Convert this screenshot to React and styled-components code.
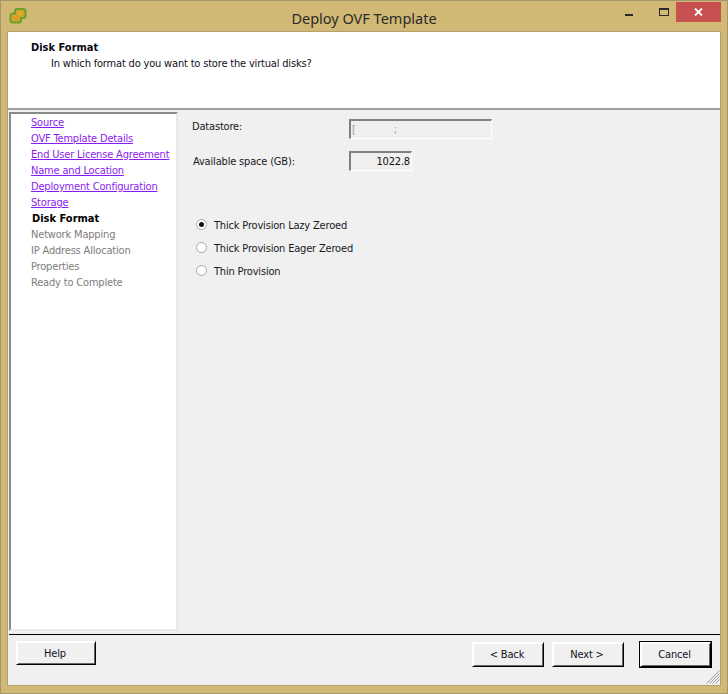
import React from 'react';
import styled, { createGlobalStyle } from 'styled-components';

const Global = createGlobalStyle`
  html, body { margin: 0; padding: 0; background: #d0b874; }
  * { box-sizing: border-box; }
`;
const Win = styled.div`
  width: 728px; height: 694px; background: #d1b975;
  border: 1px solid #a5966f;
  display: flex; flex-direction: column; overflow: hidden;
  font-family: "DejaVu Sans", Tahoma, sans-serif; font-stretch: condensed; font-size: 11px; color: #111;
  letter-spacing: -0.18px;
`;
const TitleBar = styled.div`
  height: 31px; flex: none; display: flex; align-items: flex-start; position: relative; padding-left: 8px;
`;
const AppIcon = styled.svg` width: 18px; height: 18px; margin-top: 6px; flex: none; `;
const Title = styled.div`
  position: absolute; left: 0; right: 0; top: 7px; text-align: center; letter-spacing: 0;
  font-family: "Noto Sans", sans-serif; font-stretch: normal; font-size: 14.5px; color: #2a2a2a; line-height: 20px;
`;
const Controls = styled.div`
  display: flex; align-items: flex-start; margin: 1px 6px 0 auto; position: relative;
`;
const Ctl = styled.div`
  width: ${p => p.$w}px; height: 20px; display: flex; align-items: center; justify-content: center;
  background: ${p => p.$bg || 'transparent'};
`;
const MinGlyph = styled.svg` margin-top: 6px; `;
const Frame = styled.div`
  margin: 0 7px 8px 7px; flex: 1; background: #f0f0f0; display: flex; flex-direction: column;
  box-shadow: 0 0 0 1px #b3a06b; position: relative; min-height: 0;
`;
const Header = styled.div`
  height: 78px; flex: none; background: #fff; padding: 9px 23px 0; border-bottom: 2px solid #a0a0a0;
`;
const HeaderTitle = styled.div` font-weight: 700; line-height: 14px; color: #0a0a14; letter-spacing: 0; `;
const HeaderSub = styled.div` margin: 2px 0 0 20px; line-height: 14px; color: #101020; `;
const Body = styled.div` flex: 1; display: flex; min-height: 0; padding: 2px 0 0 1px; `;
const Side = styled.div`
  width: 169px; height: 519px; flex: none; background: #fff; padding: 1px 0 0 20px;
  border-top: 2px solid #8a8a8a; border-left: 2px solid #8a8a8a;
  border-right: 2px solid #e8e8e8; border-bottom: 2px solid #e8e8e8;
`;
const Step = styled.div`
  height: 16px; line-height: 15px; white-space: nowrap;
  color: ${p => p.$state === 'done' ? '#8b1cf0' : p.$state === 'now' ? '#000' : '#7d7d7d'};
  text-decoration: ${p => p.$state === 'done' ? 'underline' : 'none'};
  font-weight: ${p => p.$state === 'now' ? 700 : 400};
  letter-spacing: ${p => p.$state === 'now' ? 0 : -0.18}px;
  margin-left: ${p => p.$state === 'now' ? 1 : 0}px;
`;
const Main = styled.div` flex: 1; padding: 7px 0 0 14px; `;
const FieldRow = styled.div`
  display: flex; align-items: center; height: 20px; margin-bottom: ${p => p.$mb}px;
`;
const Label = styled.div` width: 157px; padding-left: ${p => p.$pl || 0}px; color: #1a1a1a; position: relative; top: ${p => p.$top || 0}px; `;
const Inset = styled.div`
  width: ${p => p.$w}px; height: 20px; background: #efefef; text-align: right; padding: 1px 1px 0 0; line-height: 15px;
  border-top: 2px solid #808080; border-left: 2px solid #808080;
  border-right: 1px solid #fff; border-bottom: 1px solid #fff;
`;
const Ghost = styled.div`
  display: flex; gap: 38px; padding: 1px 0 0 1px; color: #a0a0a0; text-align: left; line-height: 14px;
`;
const Options = styled.div` margin: 47px 0 0 4px; display: flex; flex-direction: column; gap: 9px; `;
const Option = styled.div` display: flex; align-items: center; height: 14px; gap: 7px; color: #1a1a1a; `;
const Radio = styled.div`
  width: 11px; height: 11px; border-radius: 50%; background: #fff; border: 1px solid #a8a8a8;
  display: flex; align-items: center; justify-content: center; flex: none; position: relative; top: -1px;
  &::after { content: ''; width: 5px; height: 5px; border-radius: 50%; background: ${p => p.$on ? '#111' : 'transparent'}; }
`;
const Footer = styled.div`
  height: 51px; flex: none; border-top: 1px solid #000; margin-left: 1px; padding: 6px 8px 0 7px; display: flex; margin-top: 3px;
`;
const Btn = styled.div`
  width: ${p => p.$w || 72}px; height: ${p => p.$h || 24}px; display: flex; align-items: center; justify-content: center;
  margin-left: ${p => p.$ml || 0}px; margin-top: ${p => p.$mt || 0}px; background: #f0f0f0; color: #101020;
  padding-right: 2px;
  border-style: solid; border-width: 1px; border-color: #fff #000 #000 #fff;
  box-shadow: inset 1px 1px 0 #fff, inset -1px -1px 0 #696969${p => p.$def ? ', 0 0 0 1px #000' : ''};
`;
const Grip = styled.svg` position: absolute; right: 0; bottom: 1px; width: 14px; height: 14px; `;

const done = ['Source','OVF Template Details','End User License Agreement','Name and Location','Deployment Configuration','Storage'];
const later = ['Network Mapping','IP Address Allocation','Properties','Ready to Complete'];

export default function App() {
  return (
    <Win>
      <Global />
      <TitleBar>
        <AppIcon viewBox="0 0 18 18">
          <path d="M8 2h6.500a2 2 0 0 1 2 2v5a2 2 0 0 1-2 2h-2.500v2.500a2 2 0 0 1-2 2h-6.500a2 2 0 0 1-2-2v-5a2 2 0 0 1 2-2h2.500v-2.500a2 2 0 0 1 2-2z" fill="#c7a640" stroke="#6ba025" strokeWidth="2" />
          <rect x="9.500" y="4.500" width="4" height="4" fill="#f0ab14" />
          <rect x="5" y="9" width="4.500" height="4" fill="#e89a10" />
        </AppIcon>
        <Title>Deploy OVF Template</Title>
        <Controls>
          <Ctl $w={44}><MinGlyph width="8" height="2"><rect width="8" height="2" fill="#2a2a2a" /></MinGlyph></Ctl>
          <Ctl $w={25}><svg width="10" height="8"><rect x=".5" y=".5" width="9" height="7" fill="none" stroke="#2a2a2a" /><rect width="10" height="2" fill="#2a2a2a" /></svg></Ctl>
          <Ctl $w={45} $bg="#c75050">
            <svg width="9" height="8" viewBox="0 0 9 8"><path d="M1 .5 8 7.500M8 .5 1 7.500" stroke="#fff" strokeWidth="1.800" /></svg>
          </Ctl>
        </Controls>
      </TitleBar>
      <Frame>
        <Header>
          <HeaderTitle>Disk Format</HeaderTitle>
          <HeaderSub>In which format do you want to store the virtual disks?</HeaderSub>
        </Header>
        <Body>
          <Side>
            {done.map(s => <Step key={s} $state="done">{s}</Step>)}
            <Step $state="now">Disk Format</Step>
            {later.map(s => <Step key={s} $state="later">{s}</Step>)}
          </Side>
          <Main>
            <FieldRow $mb={12}><Label $top={-3}>Datastore:</Label><Inset $w={143}><Ghost><span>[</span><span>;</span></Ghost></Inset></FieldRow>
            <FieldRow $mb={0}><Label $pl={1}>Available space (GB):</Label><Inset $w={63}>1022.8</Inset></FieldRow>
            <Options>
              <Option><Radio $on />Thick Provision Lazy Zeroed</Option>
              <Option><Radio />Thick Provision Eager Zeroed</Option>
              <Option><Radio />Thin Provision</Option>
            </Options>
          </Main>
        </Body>
        <Footer>
          <Btn $w={80}>Help</Btn>
          <Btn $ml={376} $mt={1} $h={25}>&lt; Back</Btn>
          <Btn $ml={8} $mt={1} $h={25}>Next &gt;</Btn>
          <Btn $ml={16} $w={71} $mt={1} $h={25} $def>Cancel</Btn>
        </Footer>
        <Grip viewBox="0 0 14 14"><path d="M13.500 .5 .5 13.500M13.500 3.500 3.500 13.500M13.500 6.500 6.500 13.500M13.500 9.500 9.500 13.500" stroke="#9a9a9a" /></Grip>
      </Frame>
    </Win>
  );
}
